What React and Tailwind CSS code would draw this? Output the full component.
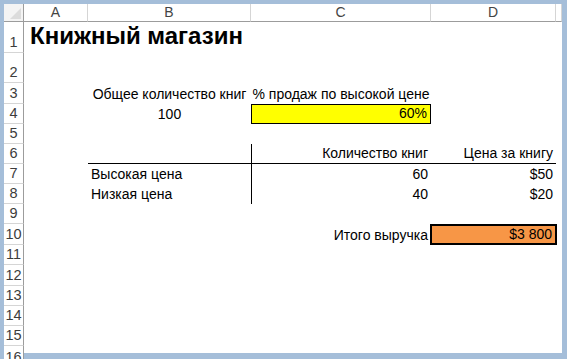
import React from 'react'

const font = { fontFamily: '"Liberation Sans", Arial, sans-serif' }

// heights of sheet rows 1..15, row 16 is cut by the scrollbar strip
const rowHeights = ['h-[31px]', 'h-[30px]', 'h-[21px]', 'h-[20px]', 'h-[20px]', 'h-[20px]', 'h-[20px]', 'h-[20px]', 'h-[20px]', 'h-[21px]', 'h-[20px]', 'h-[21px]', 'h-[20px]', 'h-[20px]', 'h-[20px]']

const Cell = ({ children, className = '', align = 'left' }) => {
  const justify = align === 'right' ? 'justify-end' : align === 'center' ? 'justify-center' : 'justify-start'
  return (
    <div className={`flex items-end ${justify} px-[3px] pb-[3px] text-[14px] leading-none text-black whitespace-nowrap ${className}`}>
      {children}
    </div>
  )
}

const App = () => {
  const cells = {
    1: { A: <Cell className="!text-[24px] font-bold !pb-[5px] pl-[6px] overflow-visible z-10">Книжный магазин</Cell> },
    3: {
      B: <Cell align="center">Общее количество книг</Cell>,
      C: <Cell align="center">% продаж по высокой цене</Cell>,
    },
    4: {
      B: <Cell align="center">100</Cell>,
      C: <Cell align="right" className="bg-[#ffff00] border border-black">60%</Cell>,
    },
    6: {
      B: <Cell className="border-b border-black" />,
      C: <Cell align="right" className="border-b border-l border-black">Количество книг</Cell>,
      D: <Cell align="right" className="border-b border-black">Цена за книгу</Cell>,
    },
    7: {
      B: <Cell>Высокая цена</Cell>,
      C: <Cell align="right" className="border-l border-black">60</Cell>,
      D: <Cell align="right">$50</Cell>,
    },
    8: {
      B: <Cell>Низкая цена</Cell>,
      C: <Cell align="right" className="border-l border-black">40</Cell>,
      D: <Cell align="right">$20</Cell>,
    },
    10: {
      C: <Cell align="right">Итого выручка</Cell>,
      D: <Cell align="right" className="bg-[#f79646] border-2 border-black !pb-[2px] -ml-[1px] -mr-[1px]">$3 800</Cell>,
    },
  }

  const cols = ['A', 'B', 'C', 'D', 'E']

  return (
    <div className="w-[567px] h-[359px] bg-[#a5bed9] pt-[4px] pl-[4px] pr-[5px] overflow-hidden" style={font}>
      <div className="grid grid-cols-[20px_64px_163px_180px_125px_6px] bg-white h-[355px] overflow-hidden">
        {/* column headers */}
        <div className="h-[18px] bg-[#f4f4f4] border-b border-r border-[#9c9c9c] flex items-end justify-end p-[2px]">
          <div className="w-0 h-0 border-l-[11px] border-l-transparent border-b-[11px] border-b-[#dcdcdc]" />
        </div>
        {cols.map((c) => (
          <div
            key={c}
            className="h-[18px] bg-white border-b border-r border-b-[#9c9c9c] border-r-[#d5d5d5] flex items-center justify-center text-[14px] text-[#444]"
          >
            {c === 'E' ? '' : c}
          </div>
        ))}

        {/* sheet rows */}
        {rowHeights.map((h, i) => {
          const r = i + 1
          return (
            <React.Fragment key={r}>
              <div className={`${h} border-b border-r border-b-[#d5d5d5] border-r-[#9c9c9c] flex items-end justify-center pb-[3px] text-[14.5px] leading-none text-[#3c3c3c]`}>
                {r}
              </div>
              {cols.map((c) => (
                <div key={c} className={`${h} flex flex-col [&>div]:h-full`}>
                  {cells[r]?.[c] ?? null}
                </div>
              ))}
            </React.Fragment>
          )
        })}

        {/* row 16, cut by the scrollbar strip */}
        <div className="h-[13px] row-span-2 border-r border-[#9c9c9c] flex items-start justify-center pt-[4px] text-[14.5px] leading-none text-[#3c3c3c]">
          16
        </div>
        <div className="h-[7px] col-span-5" />
        <div className="h-[6px] col-span-5 bg-[#a5bed9]" />
      </div>
    </div>
  )
}

export default App
